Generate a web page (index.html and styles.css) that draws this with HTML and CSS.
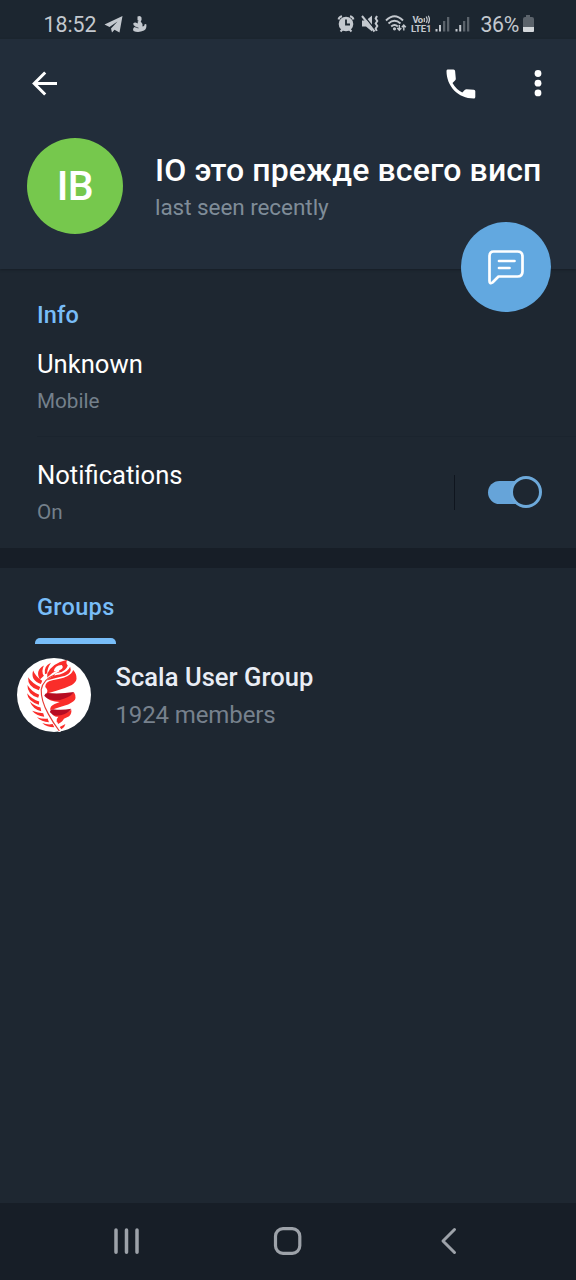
FILE: index.html
```html
<!DOCTYPE html>
<html lang="en">
<head>
<meta charset="utf-8">
<title>Profile</title>
<link rel="stylesheet" href="styles.css">
</head>
<body>
<div class="screen">
  <div class="status">
    <span class="clock">18:52</span>
    <svg class="status-left" width="44" height="20" viewBox="104 14 44 20">
      <path d="M104.500 24.500L122.500 16L119.500 32.500L114.500 29.800L112 32.500L111 28.500L117.500 21.500L109.500 27Z" fill="#c3c8ce"/>
      <path d="M137.500 16.500q3-1.500 4 1q.5 2.500-.8 4q2 1.500 1.800 5q2 0 2.300-2.500l1.500 .3q.8 4.500-2.300 6.200q-5.500 2.500-10.500.5q-1.500-3 2-4.500q-2.500-.8-2.300-3q1-1.200 3-.8l1.500.8q.3-2-.2-3.200z" fill="#c3c8ce"/>
      <path d="M134.500 26.800l4 1.200M136.500 20.500l2 .3" stroke="#1c2630" stroke-width=".7"/>
    </svg>
    <svg class="status-right" width="140" height="24" viewBox="336 12 140 24" fill="none">
      <g stroke="#c3c8ce">
        <circle cx="346" cy="24" r="7.300" fill="#c3c8ce" stroke="none"/>
        <path d="M338.600 19.500q.4-2.500 3.400-3.200M353.400 19.500q-.4-2.500-3.400-3.200M340.500 31.500l2-2M351.500 31.500l-2-2" stroke-width="2"/>
        <path d="M346 19.500v5h4" stroke="#1c2630" stroke-width="1.800"/>
        <path d="M362 20.500h4l6-5v16l-6-5h-4z" fill="#c3c8ce" stroke="none"/>
        <path d="M363.500 15l11 14" stroke="#1c2630" stroke-width="1.300"/>
        <path d="M362 16l12.500 15.500" stroke-width="2"/>
        <path d="M377 16l-1.300 2.500l1.600 2.500l-1.600 2.500l1.600 2.500l-1.600 2.500l1 2.500" stroke-width="2"/>
        <path d="M386 20.500q8.500-8.500 17 0M388.500 23.500q6-5.500 12 0M391.200 26.500q3.300-3 6.600 0" stroke-width="1.900"/>
        <circle cx="394.500" cy="28.800" r="1.600" fill="#c3c8ce" stroke="none"/>
        <path d="M399.300 25v5M397.300 28l2 2.300l2-2.300M403.800 30.500v-5M401.800 27.300l2-2.300l2 2.300" stroke-width="1.400"/>
      </g>
      <text x="412.500" y="23" class="net" textLength="10.500">Vo</text>
      <path d="M424.300 18v4M426.200 16.500q2 3 0 6.300M428.300 15.800q2.200 3.700 0 7.600" stroke="#c3c8ce" stroke-width="1.200"/>
      <text x="411" y="32" class="net" textLength="20.500">LTE1</text>
      <g fill="#c3c8ce">
        <path d="M435.500 29h2v2.500h-2zM439 25h2v6.500h-2z"/>
        <path d="M455.500 29h2v2.500h-2zM459.200 25h2v6.500h-2z"/>
        <path d="M443 21h2.300v10.500h-2.300zM447 17h2.300v14.500h-2.300zM463 21h2.300v10.500h-2.300zM467 17h2.300v14.500h-2.300z" opacity=".38"/>
      </g>
    </svg>
    <span class="percent">36%</span>
    <svg class="battery" width="12" height="18" viewBox="0 0 12 18">
      <path d="M4 0h4v2h2q2 0 2 2v8H1V4q0-2 2-2h1z" fill="#5b636b"/>
      <path d="M1 12h11v4q0 1-1 1H2q-1 0-1-1z" fill="#d3d7db"/>
    </svg>
  </div>

  <header class="header">
    <div class="toolbar">
      <svg class="back" width="28" height="28" viewBox="0 0 28 28" fill="none" stroke="#fff" stroke-width="3">
        <path d="M14.200 3.500L3.200 14.500L14.200 25.500M2.800 14.500H26"/>
      </svg>
      <svg class="call" width="30" height="30" viewBox="0 0 30 30">
        <path d="M1.500.5H7.500Q9 .5 9.100 2L9.800 9.500Q9.900 10.800 9 11.600L6.500 14Q10 20.300 16.300 23.500L18.700 21Q19.400 20.200 20.500 20.200L27.800 20.800Q29.300 20.900 29.300 22.300V28Q29.300 29.500 27.800 29.500C12 29.500 .5 17 .5 2Q.5.500 1.500.500Z" fill="#fff"/>
      </svg>
      <svg class="more" width="8" height="28" viewBox="0 0 8 28" fill="#fff">
        <circle cx="4" cy="4.500" r="3.400"/><circle cx="4" cy="14.200" r="3.400"/><circle cx="4" cy="23.900" r="3.400"/>
      </svg>
    </div>
    <div class="profile">
      <div class="avatar">IB</div>
      <div class="who">
        <div class="name">IO это прежде всего висп</div>
        <div class="seen">last seen recently</div>
      </div>
    </div>
    <div class="fab">
      <svg width="38" height="38" viewBox="0 0 38 38" fill="none" stroke="#fff" stroke-width="2.700" stroke-linecap="round" stroke-linejoin="round">
        <path d="M6.500 3.500H30.500Q35.500 3.500 35.500 8.500V23.500Q35.500 28.500 30.500 28.500H11.500L5.500 34.500Q2.500 36.500 2.500 33V8.500Q2.500 3.500 6.500 3.500ZM12 13H27.500M12 20H22.500"/>
      </svg>
    </div>
  </header>

  <section class="info">
    <h2 class="label">Info</h2>
    <div class="row phone">
      <div class="value">Unknown</div>
      <div class="hint">Mobile</div>
    </div>
    <div class="row notify">
      <div>
        <div class="value">Notifications</div>
        <div class="hint">On</div>
      </div>
      <div class="control"><div class="switch"><i class="knob"></i></div></div>
    </div>
  </section>

  <section class="groups">
    <div class="tabs"><div class="tab">Groups</div></div>
    <div class="group">
      <svg class="logo" width="74" height="74" viewBox="23 26 220 220">
        <circle cx="133" cy="136" r="110" fill="#fff"/>
        <g fill="#fa2d2a">
          <path d="M107 112Q106 97 128 92Q168 87 183 73Q188 68 190 62Q201 74 200 88Q199 98 186 106Q166 116 140 123L110 132Q118 122 107 112Z"/>
          <path d="M108 140L168 141Q188 137 192 127Q197 134 197 145Q196 155 175 164Q152 171 122 181Q120 169 135 163L150 157Q119 157 108 140Z"/>
          <path d="M124 187L165 189Q180 186 184 178Q187 190 178 199L141 217Q139 207 146 201Q130 201 124 187Z"/>
          <path fill-rule="evenodd" d="M113 73Q125 42 172 31Q167 42 174 48Q168 66 145 70Q130 72 113 88ZM132 66Q135 48 156 47Q165 57 148 63Z"/>
          <path d="M111 93Q128 76 150 75Q174 68 181 52Q188 70 166 79Q136 86 111 93Z"/>
          <path d="M106 74Q101 50 124 40Q112 58 113 71ZM91 90Q76 62 103 48Q94 66 103 79ZM94 103Q62 92 71 63Q78 81 98 94ZM88 122Q54 112 56 83Q69 102 92 112ZM86 144Q53 134 54 106Q67 127 89 135ZM88 165Q55 155 53 131Q68 150 89 155ZM95 184Q71 179 61 155Q77 170 93 173ZM104 201Q80 198 68 183Q86 190 101 190ZM118 217Q96 215 82 202Q100 208 114 206ZM134 232Q112 232 98 219Q116 226 129 222ZM142 214L163 205Q159 216 145 222ZM150 231L167 222Q164 234 155 238Z"/>
        </g>
        <path d="M104 138Q106 131 114 130Q150 134 192 127Q187 139 162 147Q148 153 130 151Q114 149 104 138ZM121 187Q121 180 130 178Q155 182 184 177Q180 187 163 193Q150 198 140 197Q128 196 121 187Z" fill="#b70c22"/>
        <path d="M148 63Q107 82 99 116Q96 151 118 190Q133 221 151 247" fill="none" stroke="#fff" stroke-width="6"/>
        <path d="M136 76Q101 89 95 120Q94 153 116 192Q130 218 149 243" fill="none" stroke="#e63a32" stroke-width="3.500"/>
      </svg>
      <div>
        <div class="group-name">Scala User Group</div>
        <div class="members">1924 members</div>
      </div>
    </div>
  </section>

  <nav class="nav">
    <svg width="576" height="77" viewBox="0 1203 576 77" fill="none" stroke="#9da2a9" stroke-width="3.500" stroke-linecap="round" stroke-linejoin="round">
      <path d="M116 1230v22.300M126.500 1230v22.300M137 1230v22.300"/>
      <rect x="275.500" y="1228.700" width="24.300" height="24.600" rx="7.500" stroke-width="3.200"/>
      <path d="M454.500 1229.500L443 1241L454.500 1252.500" stroke-width="3"/>
    </svg>
  </nav>
</div>
</body>
</html>
```
FILE: styles.css
```css
* { box-sizing: border-box; }
body { margin: 0; background: #1e2731; font-family: Roboto, "Noto Sans", sans-serif; color: #fff; }
.screen { width: 576px; height: 1280px; display: flex; flex-direction: column; overflow: hidden; background: #1e2731; }
.screen svg { display: block; flex: none; }

.status { height: 39px; background: #1c2630; display: flex; padding-left: 43px; color: #c3c8ce; font-size: 21.3px; line-height: 30px; flex: none; }
.clock { width: 61px; padding: 10px 0 0 .5px; }
.status-left { margin-top: 14px; }
.status-right { margin: 12px 0 0 188px; }
.net { font-size: 9.5px; font-weight: 700; fill: #c3c8ce; }
.percent { width: 46px; padding: 10px 0 0 4.5px; white-space: nowrap; letter-spacing: -.4px; }
.battery { margin-top: 15px; }

.header { position: relative; height: 230px; background: #222d3a; flex: none; box-shadow: 0 1px 2px #161e27; }
.toolbar { height: 99px; display: flex; padding: 30px 34.5px 0 31px; }
.call { margin-left: auto; }
.more { margin-left: 58px; }
.profile { display: flex; padding-left: 27px; }
.avatar { width: 96px; height: 96px; border-radius: 50%; background: #76c84d; font-weight: 500; font-size: 41px; line-height: 96px; text-align: center; letter-spacing: -.5px; }
.who { margin-left: 32px; padding-top: 11px; white-space: nowrap; }
.name { font-size: 32px; line-height: 42px; font-weight: 500; letter-spacing: .13px; }
.seen { padding-top: 1px; font-size: 22.500px; line-height: 30px; letter-spacing: -.06px; color: #7f8c98; }
.fab { position: absolute; left: 460.500px; top: 182.500px; width: 90px; height: 90px; border-radius: 50%; background: #62a8e0; display: flex; align-items: center; justify-content: center; }

.info { height: 279px; flex: none; padding-top: 31px; }
.label { margin: 0 0 0 37px; font-size: 23.500px; line-height: 30px; font-weight: 500; letter-spacing: .15px; color: #78bdf8; }
.row { margin-left: 37px; }
.phone { height: 107px; padding-top: 19px; border-bottom: 1px solid #1b242e; }
.value { font-size: 25.600px; line-height: 30px; }
.hint { padding-top: 7px; font-size: 20.700px; line-height: 30px; color: #74808b; }
.notify { display: flex; justify-content: space-between; padding: 23px 33px 0 0; }
.control { width: 89px; height: 35px; margin-top: 15px; border-left: 1px solid #0f151e; padding: 1px 0 0 33px; }
.switch { width: 54px; height: 32px; display: flex; align-items: center; }
.switch::before { content: ""; width: 38px; height: 23px; flex: none; background: #66a4d9; border-radius: 12px; }
.knob { width: 32px; height: 32px; flex: none; margin-left: -16px; border: 3.500px solid #6da9da; background: #1e2731; border-radius: 50%; }

.groups { flex: 1; border-top: 20px solid #171e27; }
.tabs { height: 76px; padding-left: 35px; display: flex; }
.tab { width: 81px; padding: 24px 0 0 2px; font-size: 23.500px; line-height: 30px; font-weight: 500; letter-spacing: .3px; color: #78bdf8; display: flex; flex-direction: column; justify-content: space-between; }
.tab::after { content: ""; height: 6px; margin-left: -2px; background: #78bdf8; border-radius: 5px 5px 0 0; }
.group { display: flex; padding: 14.400px 0 0 17.400px; }
.group > div { margin-left: 24px; }
.group-name { padding-top: 3.600px; font-size: 25.500px; line-height: 30px; font-weight: 500; letter-spacing: .07px; color: #e9edf5; }
.members { padding-top: 8px; font-size: 24px; line-height: 30px; letter-spacing: -.1px; color: #77818d; }
.nav { height: 77px; background: #171e27; flex: none; }
```
